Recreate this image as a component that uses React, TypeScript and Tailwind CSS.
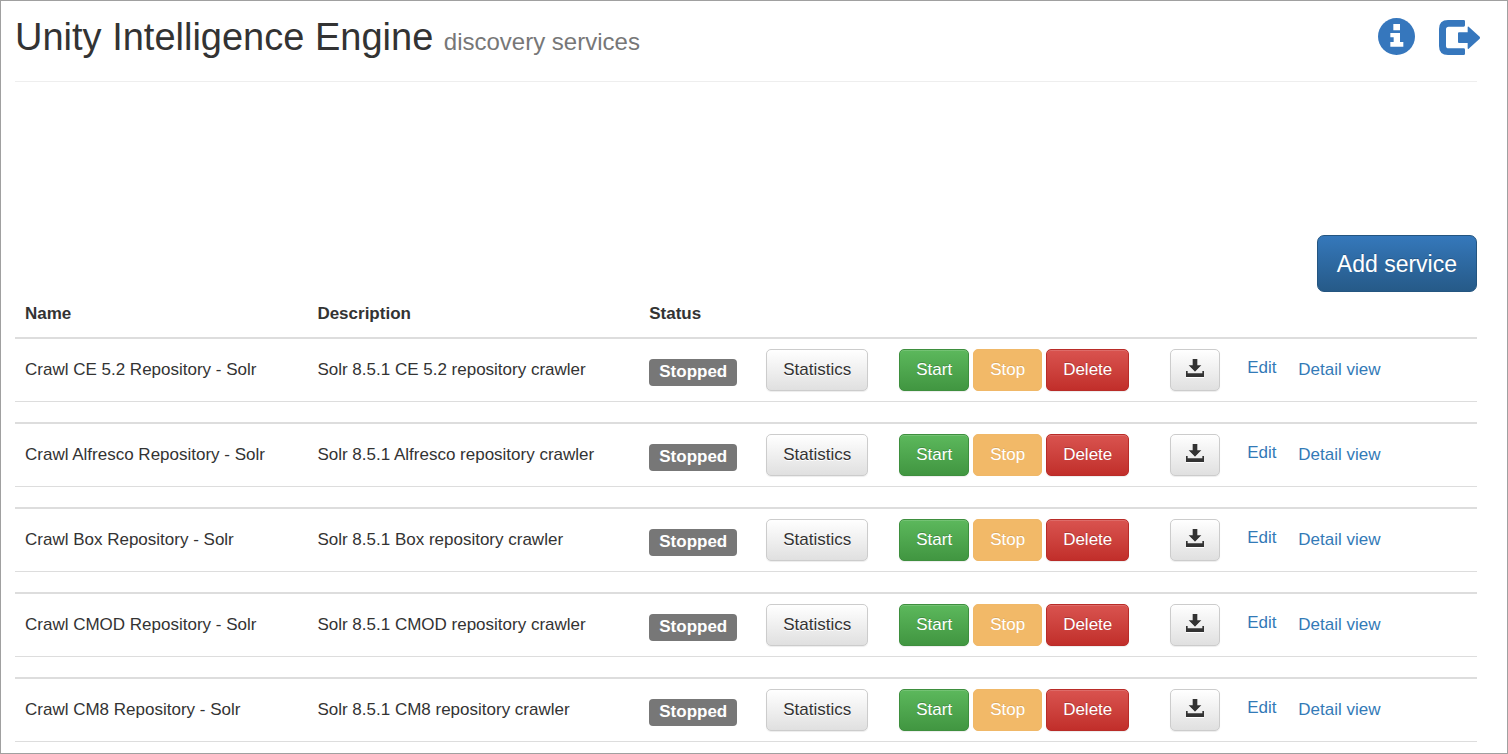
import React from "react";

type Service = { name: string; description: string };

const services: Service[] = [
  { name: "Crawl CE 5.2 Repository - Solr", description: "Solr 8.5.1 CE 5.2 repository crawler" },
  { name: "Crawl Alfresco Repository - Solr", description: "Solr 8.5.1 Alfresco repository crawler" },
  { name: "Crawl Box Repository - Solr", description: "Solr 8.5.1 Box repository crawler" },
  { name: "Crawl CMOD Repository - Solr", description: "Solr 8.5.1 CMOD repository crawler" },
  { name: "Crawl CM8 Repository - Solr", description: "Solr 8.5.1 CM8 repository crawler" },
];

const button =
  "inline-flex h-[42px] items-center justify-center rounded-[5px] border bg-linear-to-b whitespace-nowrap";
const light =
  "border-[#ccc] from-white to-[#e0e0e0] text-[#333] text-shadow-[0_1px_0_#fff] shadow-[inset_0_1px_0_rgba(255,255,255,.15),0_1px_1px_rgba(0,0,0,.075)]";
const dark =
  "text-white text-shadow-[0_-1px_0_rgba(0,0,0,.2)] shadow-[inset_0_1px_0_rgba(255,255,255,.15),0_1px_1px_rgba(0,0,0,.075)]";

function InfoIcon() {
  return (
    <svg viewBox="0 0 111 111" className="size-[37px]" fill="currentColor" aria-hidden="true">
      <circle cx="55.5" cy="55.5" r="55.5" />
      <path fill="#fff" d="M46 18h20v19H46zM37 45h29v27h10v14H37V72h10V58H37z" />
    </svg>
  );
}

function LogoutIcon() {
  return (
    <svg viewBox="0 0 123 105" className="h-[35px] w-[41px]" fill="currentColor" aria-hidden="true">
      <path d="M27 0H74Q78 0 78 4V16Q78 20 74 20H29Q21 20 21 28V77Q21 85 29 85H74Q78 85 78 89V101Q78 105 74 105H27Q0 105 0 78V27Q0 0 27 0z" />
      <path d="M60 37H86V22Q86 18 89 20L122 50Q124 53 122 56L89 86Q86 88 86 84V69H60Q57 69 57 66V40Q57 37 60 37z" />
    </svg>
  );
}

function SaveIcon() {
  return (
    <svg
      viewBox="0 0 54 54"
      className="size-[18px] drop-shadow-[0_1px_0_#fff]"
      fill="currentColor"
      aria-hidden="true"
    >
      <path d="M20 0H34V19H46L27 38L8 19H20zM0 36H5V43H49V36H54V54H0z" />
    </svg>
  );
}

function ServiceRow({ service }: { service: Service }) {
  const cell = "border-t-2 border-b border-t-[#ddd] border-b-[#ddd] p-[10px] align-middle";
  return (
    <tr>
      <td className={cell}>{service.name}</td>
      <td className={cell}>{service.description}</td>
      <td className={`${cell} pt-[15px]`}>
        <span className="inline-block rounded-[4px] bg-[#777] px-[10px] pt-[3px] pb-[4px] align-middle text-[17px] leading-[20px] font-bold text-white">
          Stopped
        </span>
      </td>
      <td className={cell}>
        <button type="button" className={`${button} ${light} px-4`}>
          Statistics
        </button>
      </td>
      <td className={cell}>
        <div className="flex gap-1">
          <button type="button" className={`${button} ${dark} border-[#3e8f3e] from-[#5cb85c] to-[#419641] px-4`}>
            Start
          </button>
          <button
            type="button"
            disabled
            className={`${button} border-[#f0b868] bg-[#f2b968] px-4 text-white text-shadow-[0_-1px_0_rgba(0,0,0,.1)]`}
          >
            Stop
          </button>
          <button type="button" className={`${button} ${dark} border-[#b92c28] from-[#d9534f] to-[#c12e2a] px-4`}>
            Delete
          </button>
        </div>
      </td>
      <td className={cell}>
        <button type="button" aria-label="Download" className={`${button} ${light} px-[15px] pb-[4px]`}>
          <SaveIcon />
        </button>
      </td>
      <td className={`${cell} pb-[14px]`}>
        <a href="#edit" className="text-[#337ab7]">
          Edit
        </a>
      </td>
      <td className={cell}>
        <a href="#detail" className="text-[#337ab7]">
          Detail view
        </a>
      </td>
    </tr>
  );
}

export default function App() {
  return (
    <div className="min-h-screen border border-[#a0a0a0] bg-white pr-[30px] pl-[14px] font-['Liberation_Sans',Arial,sans-serif] text-[17px] leading-[24px] text-[#333]">
      <header className="flex h-[81px] justify-between border-b border-[#eee] pt-[15px]">
        <h1 className="text-[38px] leading-[42px]">
          Unity Intelligence Engine <small className="text-[24px] text-[#777]">discovery services</small>
        </h1>
        <nav className="-mr-[3px] flex items-start gap-6 pt-[2px] text-[#3677bd]">
          <a href="#about" aria-label="About">
            <InfoIcon />
          </a>
          <a href="#logout" aria-label="Log out" className="pt-[2px]">
            <LogoutIcon />
          </a>
        </nav>
      </header>

      <main>
        <div className="flex justify-end pt-[153px]">
          <button
            type="button"
            className="h-[57px] rounded-[7px] border border-[#245580] bg-linear-to-b from-[#3578bb] to-[#265a88] px-[19px] text-[23px] text-white text-shadow-[0_-1px_0_rgba(0,0,0,.2)]"
          >
            Add service
          </button>
        </div>

        <table className="w-full table-fixed border-separate border-spacing-0">
          <colgroup>
            <col className="w-[20%]" />
            <col className="w-[22.7%]" />
            <col className="w-[8%]" />
            <col className="w-[9.1%]" />
            <col className="w-[18.5%]" />
            <col className="w-[5.3%]" />
            <col className="w-[3.5%]" />
            <col />
          </colgroup>
          <thead>
            <tr className="text-left">
              <th className="px-[10px] pt-[10px] pb-[11px]">Name</th>
              <th className="px-[10px] pt-[10px] pb-[11px]">Description</th>
              <th className="px-[10px] pt-[10px] pb-[11px]">Status</th>
              <td colSpan={5} />
            </tr>
          </thead>
          <tbody>
            {services.map((service, index) => (
              <React.Fragment key={service.name}>
                {index > 0 && (
                  <tr aria-hidden="true">
                    <td colSpan={8} className="h-5 p-0" />
                  </tr>
                )}
                <ServiceRow service={service} />
              </React.Fragment>
            ))}
          </tbody>
        </table>
      </main>
    </div>
  );
}
